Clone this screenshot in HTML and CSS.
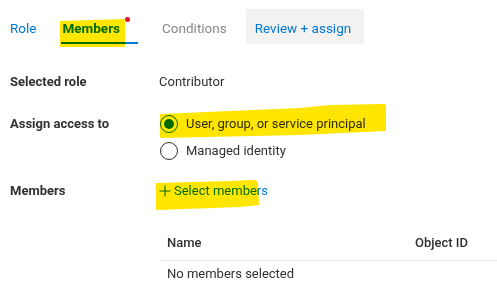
FILE: index.html
```html
<!DOCTYPE html>
<html>
<head>
<meta charset="utf-8">
<link rel="stylesheet" href="styles.css">
</head>
<body>
<div class="page">
  <nav class="tabs">
    <div class="tab tab-role">Role</div>
    <div class="tab tab-members active">Members<span class="dot"></span></div>
    <div class="tab tab-cond">Conditions</div>
    <div class="tab tab-review">Review + assign</div>
  </nav>

  <div class="form">
    <div class="row row-role">
      <div class="label">Selected role</div>
      <div class="value">Contributor</div>
    </div>
    <div class="row row-access">
      <div class="label">Assign access to</div>
      <div class="value radios">
        <div class="radio checked"><span class="circle"></span><span>User, group, or service principal</span></div>
        <div class="radio"><span class="circle"></span><span>Managed identity</span></div>
      </div>
    </div>
    <div class="row row-members">
      <div class="label">Members</div>
      <div class="value">
        <a class="link"><svg class="plus" width="12" height="12" viewBox="0 0 12 12"><path d="M6 0.5v11M0.5 6h11" stroke="#0078d4" stroke-width="1.1" fill="none"/></svg>Select members</a>
      </div>
    </div>
    <div class="table">
      <div class="thead">
        <div class="th th-name">Name</div>
        <div class="th th-id">Object ID</div>
      </div>
      <div class="empty">No members selected</div>
    </div>
  </div>

  <svg class="marker" width="497" height="295" viewBox="0 0 497 295">
    <path d="M60 21 L124 19 Q125 19 125 21 L125 46 Q125 47 124 47 L61 47 Q60 47 60 46 Z" fill="#ffe600"/>
    <path d="M160 114 L300 108 L330 105 L384 104 Q386 104 386 106 L386 131 L300 135 L161 138 Q160 138 160 137 Z" fill="#ffe600"/>
    <path d="M156 183 L230 181 L252 180 Q258 180 258 183 L259 205 L240 207 L157 210 Q156 210 156 209 Z" fill="#ffe600"/>
  </svg>
</div>
</body>
</html>
```
FILE: styles.css
```css
html, body {
  margin: 0;
  padding: 0;
  background: #ffffff;
}
body {
  font-family: Roboto, "Noto Sans", sans-serif;
  font-size: 13px;
  color: #323130;
}
.page {
  position: relative;
  width: 497px;
  height: 295px;
  overflow: hidden;
}
.tabs {
  display: flex;
  margin-top: 9px;
  height: 35px;
}
.tab {
  position: relative;
  display: flex;
  align-items: center;
  font-size: 13.5px;
  color: #0078d4;
  padding-top: 3px;
  box-sizing: border-box;
}
.tab-role { margin-left: 10px; }
.tab-members {
  margin-left: 25px;
  padding-left: 1px;
  padding-right: 18px;
  font-weight: 700;
}
.tab-members.active::after {
  content: "";
  position: absolute;
  left: 0;
  right: 0;
  bottom: 0;
  height: 2px;
  background: #0078d4;
}
.dot {
  position: absolute;
  left: 64px;
  top: 8px;
  width: 5px;
  height: 5px;
  border-radius: 50%;
  background: #e81123;
}
.tab-cond {
  margin-left: 24px;
  color: #8a8886;
}
.tab-review {
  margin-left: 19px;
  padding: 3px 13px 0 9px;
  background: #f3f2f1;
}
.form {
  display: flex;
  flex-direction: column;
  margin-top: 28px;
}
.row {
  display: grid;
  grid-template-columns: 149px 1fr;
  padding-left: 10px;
  line-height: 20px;
}
.label {
  font-weight: 700;
}
.row-access { margin-top: 22px; }
.radios {
  display: flex;
  flex-direction: column;
  gap: 7px;
}
.radio {
  display: flex;
  align-items: center;
  gap: 8px;
  margin-left: 1px;
}
.circle {
  box-sizing: border-box;
  width: 18px;
  height: 18px;
  border-radius: 50%;
  border: 1px solid #323130;
  display: flex;
  align-items: center;
  justify-content: center;
}
.radio.checked .circle {
  border-color: #0078d4;
}
.radio.checked .circle::before {
  content: "";
  width: 10px;
  height: 10px;
  border-radius: 50%;
  background: #0078d4;
}
.row-members { margin-top: 20px; }
.link {
  color: #0078d4;
  display: inline-flex;
  align-items: center;
  gap: 3px;
}
.table {
  margin-left: 159px;
  margin-top: 21px;
}
.thead {
  display: flex;
  height: 36px;
  align-items: center;
  border-bottom: 1px solid #edebe9;
  font-weight: 500;
}
.th-name { margin-left: 8px; width: 248px; }
.empty {
  margin-left: 8px;
  line-height: 20px;
  margin-top: 3px;
}
.marker {
  position: absolute;
  left: 0;
  top: 0;
  pointer-events: none;
  mix-blend-mode: multiply;
}
```
